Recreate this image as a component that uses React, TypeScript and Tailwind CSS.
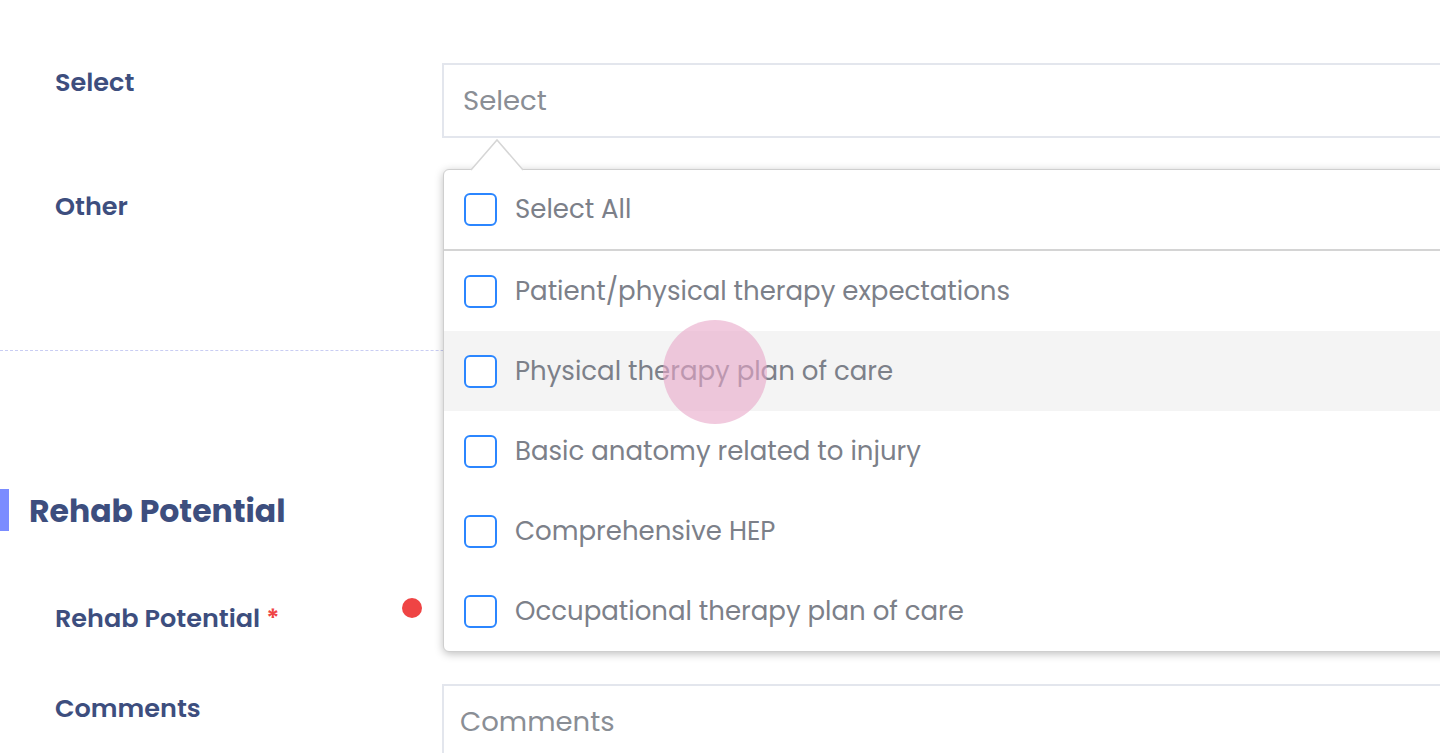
const options = [
  "Patient/physical therapy expectations",
  "Physical therapy plan of care",
  "Basic anatomy related to injury",
  "Comprehensive HEP",
  "Occupational therapy plan of care",
];

function Checkbox() {
  return <div className="w-[33px] h-[33px] shrink-0 rounded-[6px] border-2 border-[#2b86ff] bg-white" />;
}

export default function App() {
  return (
    <div
      className="relative w-full h-[753px] overflow-hidden bg-white"
      style={{ fontFamily: "Poppins, 'Open Sans', sans-serif" }}
    >
      {/* Select row */}
      <div className="flex pt-[63px]">
        <div className="w-[442px] shrink-0 pl-[55px] pt-[1px] text-[25.5px] leading-[36px] font-semibold text-[#3d4e7e]">Select</div>
        <div className="flex-1 h-[75px] border-2 border-[#e3e6ed] border-r-0 flex items-center pl-[19px] text-[27.5px] text-[#8a8e95]">
          Select
        </div>
      </div>

      {/* Other row */}
      <div className="flex pt-[50px] h-[212px]">
        <div className="w-[442px] shrink-0 pl-[55px] text-[25.5px] leading-[36px] font-semibold text-[#3d4e7e]">Other</div>
      </div>
      <div className="border-t border-dashed border-[#c9cdf3]" />

      {/* Rehab Potential section */}
      <div className="flex items-center mt-[138px] h-[42px]">
        <div className="w-[9px] h-[42px] bg-[#7b8cff]" />
        <div className="pl-[20px] text-[31.5px] leading-[42px] pt-[2px] font-bold text-[#3d4e7e]">Rehab Potential</div>
      </div>

      <div className="flex mt-[69px] h-[40px]">
        <div className="w-[442px] shrink-0 pl-[55px] flex items-start justify-between pr-[20px]">
          <span className="text-[25.5px] leading-[36px] font-semibold text-[#3d4e7e]">
            Rehab Potential <span className="text-[#ef4444]">*</span>
          </span>
          <span className="w-[20px] h-[20px] rounded-full bg-[#ef4444] mt-[-2px]" />
        </div>
      </div>

      <div className="flex mt-[44px]">
        <div className="w-[442px] shrink-0 pl-[55px] pt-[6px] text-[25.5px] leading-[36px] font-semibold text-[#3d4e7e]">Comments</div>
        <div className="flex-1 h-[80px] border-2 border-[#e3e6ed] border-r-0 pl-[16px] pt-[16px] text-[27.5px] leading-[40px] text-[#8a8e95]">
          Comments
        </div>
      </div>

      {/* Dropdown overlay */}
      <div className="absolute left-[443px] top-[169px] right-[-20px]">
        <svg className="absolute left-[26px] top-[-31px]" width="56" height="33" viewBox="0 0 56 33">
          <polygon points="2,32 28,2 54,32" fill="white" />
          <polyline points="2,32 28,2 54,32" fill="none" stroke="#d6d6d6" strokeWidth="1.5" />
        </svg>
        <div className="bg-white border border-[#cfcfcf] rounded-[6px] shadow-[0_2px_8px_rgba(0,0,0,0.25)] overflow-hidden">
          <div className="flex items-center gap-[18px] h-[81px] pl-[20px] text-[26px] text-[#7c8089] border-b-2 border-[#d4d4d4]">
            <Checkbox />
            <span>Select All</span>
          </div>
          {options.map((o, i) => (
            <div
              key={o}
              className={`flex items-center gap-[18px] h-[80px] pl-[20px] text-[26px] text-[#7c8089] ${i === 1 ? "bg-[#f4f4f4]" : ""}`}
            >
              <Checkbox />
              <span>{o}</span>
            </div>
          ))}
        </div>
      </div>

      {/* click ripple */}
      <div className="absolute left-[663px] top-[320px] w-[104px] h-[104px] rounded-full bg-[#e8a6c8]/60" />
    </div>
  );
}
